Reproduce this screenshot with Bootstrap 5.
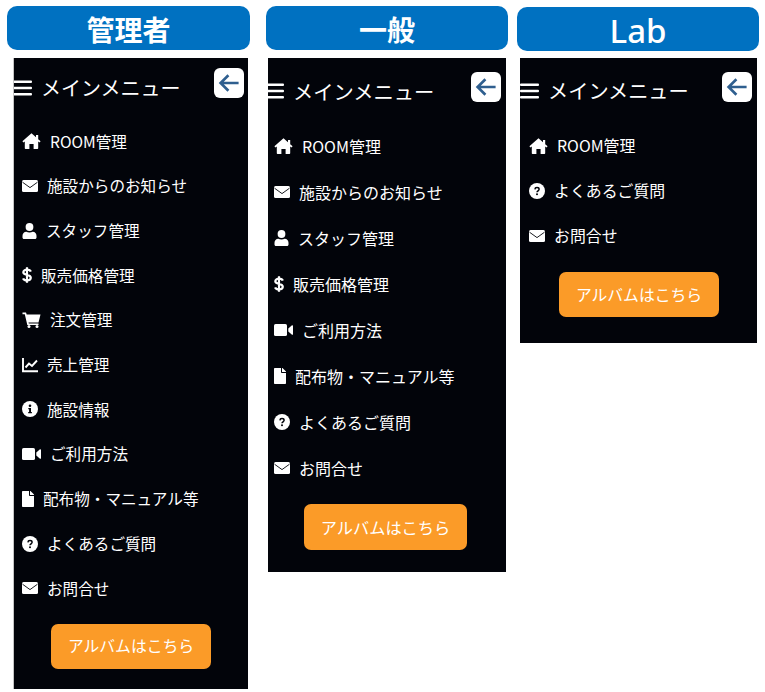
<!DOCTYPE html>
<html lang="ja">
<head>
  <meta charset="UTF-8" />
  <meta name="viewport" content="width=device-width, initial-scale=1" />
  <title>メインメニュー</title>
  <link href="https://cdn.jsdelivr.net/npm/bootstrap@5.3.0/dist/css/bootstrap.min.css" rel="stylesheet" />
  <style>
    body { background: #fff; font-family: "Noto Sans CJK JP", "Noto Sans", sans-serif; }
    .page-wrap { padding: 6px 0 0 7px; height: 692px; overflow: hidden; }
    .role-col { width: 243px; flex: none; }
    .role-col-b { width: 242px; margin-left: 16px; }
    .role-col-c { width: 242px; margin-left: 9px; }
    .role-head { height: 44px; padding-top: 2px; background: #0071c1; color: #fff; border-radius: 10px; font-size: 28px; font-weight: 700; line-height: 1; }
    .role-col-c .role-head { margin-top: 1px; font-family: "Noto Sans", sans-serif; font-size: 33px; font-weight: 500; }
    .side-panel { background: #02040a; color: #fff; overflow: hidden; margin-top: 8px; }
    .panel-a { margin-left: 6px; width: 235px; height: 631px; border-left: 1px solid #c4c4c4; }
    .panel-b { margin-left: 2px; width: 238px; height: 514px; }
    .panel-c { margin-left: 3px; width: 237px; height: 285px; margin-top: 7px; }
    .panel-top { height: 59px; margin-bottom: 2px; padding-right: 4px; }
    .panel-b .panel-top, .panel-c .panel-top { height: 56px; margin-top: 5px; margin-bottom: 4px; padding-right: 5px; }
    .menu-title { font-size: 20px; line-height: 1; margin-left: 9px; white-space: nowrap; }
    .panel-b .menu-title { font-size: 20.3px; margin-left: 9px; }
    .panel-c .menu-title { font-size: 20.2px; margin-left: 9px; }
    .bars-ico { width: 19px; height: 16px; fill: #fff; flex: none; margin-left: -1px; }
    .panel-b .bars-ico { margin-left: -3px; }
    .panel-c .bars-ico { margin-left: 0; }
    .back-box { width: 30px; height: 30px; background: #fff; border-radius: 6px; border: 0; margin-top: -9px; }
    .back-box svg { width: 24px; height: 24px; fill: none; stroke: #2f5f8f; stroke-width: 2.2; }
    .menu-list { list-style: none; margin: 0; padding: 0 0 0 8px; font-size: 15.6px; }
    .panel-b .menu-list { padding-left: 6px; font-size: 16px; }
    .panel-c .menu-list { padding-left: 9px; font-size: 15.9px; }
    .menu-list li { height: 44.7px; }
    .panel-b .menu-list li { height: 46px; }
    .panel-c .menu-list li { height: 45px; }
    .menu-ico { height: 16px; fill: #fff; margin-right: 9px; flex: none; }
    .album-btn { background: #fb9b28; border: 0; color: #fff; border-radius: 7px; width: 160px; height: 45px; font-size: 15.8px; }
    .album-btn:hover { background: #fb9b28; color: #fff; }
    .panel-b .album-btn { width: 163px; height: 46px; font-size: 16.2px; }
    .album-row-a { padding-left: 37px; margin-top: 13px; }
    .album-row-b { padding-left: 36px; margin-top: 13px; }
    .album-row-c { padding-left: 39px; margin-top: 14px; }
  </style>
</head>
<body>
  <svg width="0" height="0" class="position-absolute">
    <symbol id="i-bars" viewBox="0 0 19 16"><rect y="0.500" width="19" height="2.600" rx="1"/><rect y="6.700" width="19" height="2.600" rx="1"/><rect y="12.900" width="19" height="2.600" rx="1"/></symbol>
    <symbol id="i-home" viewBox="0 0 19 16"><path d="M9.500 .3L.4 8.300l1.100 1.300 1.300-1.100v6.700c0 .4.300.7.700.7h3.900v-5h4.200v5h3.900c.4 0 .7-.3.700-.7V8.500l1.300 1.100 1.100-1.300-2.400-2.100V2h-2.200v2.300z"/></symbol>
    <symbol id="i-mail" viewBox="0 0 16 16"><rect y="2" width="16" height="12" rx="1.500"/><path d="M.5 4.200L8 9.600l7.500-5.400" fill="none" stroke="#02040a" stroke-width=".9"/></symbol>
    <symbol id="i-user" viewBox="0 0 15 16"><circle cx="7.500" cy="4" r="3.900"/><path d="M4.300 8.800C5.200 9.200 6.300 9.500 7.500 9.500S9.800 9.200 10.700 8.800C13 8.800 14.500 10.500 14.500 12.800V14.500C14.500 15.300 13.900 16 13 16H2C1.100 16 .5 15.300 .5 14.500V12.800C.5 10.500 2 8.800 4.300 8.800z"/></symbol>
    <symbol id="i-dollar" viewBox="0 0 10 16"><path d="M8.800 4.600C8.300 3.200 6.800 2.600 5 2.600 3 2.600 1.300 3.600 1.300 5.200 1.300 8.700 8.800 7 8.800 10.800 8.800 12.400 7 13.400 5 13.400 3.100 13.400 1.600 12.700 1.100 11.300M5 .2V15.800" fill="none" stroke="#fff" stroke-width="2.200"/></symbol>
    <symbol id="i-cart" viewBox="0 0 19 16"><path d="M.5 .5H4L4.700 2.500H18.500L16.500 10.500H6.500L6.800 11.500H16.500V13H5.300L2.800 2.200H.5z"/><circle cx="7" cy="14.500" r="1.500"/><circle cx="15" cy="14.500" r="1.500"/></symbol>
    <symbol id="i-chart" viewBox="0 0 16 16"><path d="M1 1V14.300H16M3.500 10.500L7 6.500 10 9 15 3.500" fill="none" stroke="#fff" stroke-width="1.900"/></symbol>
    <symbol id="i-info" viewBox="0 0 16 16"><circle cx="8" cy="8" r="8"/><circle cx="8" cy="4.800" r="1.300" fill="#02040a"/><path d="M6.300 7H9V10.900H9.900V12.200H6.200V10.900H7.100V8.300H6.300z" fill="#02040a"/></symbol>
    <symbol id="i-video" viewBox="0 0 19 16"><rect y="2" width="13" height="12" rx="1.600"/><path d="M14.300 6.600L18 3.300C18.400 3 19 3.200 19 3.800V12.200C19 12.800 18.400 13 18 12.700L14.300 9.400z"/></symbol>
    <symbol id="i-file" viewBox="0 0 384 512"><path d="M224 136V0H24C10.700 0 0 10.700 0 24v464c0 13.300 10.700 24 24 24h336c13.300 0 24-10.700 24-24V160H248c-13.200 0-24-10.800-24-24zm160-14.100v6.100H256V0h6.100c6.400 0 12.500 2.500 17 7l97.900 98c4.500 4.500 7 10.600 7 16.900z"/></symbol>
    <symbol id="i-help" viewBox="0 0 16 16"><circle cx="8" cy="8" r="8"/><path d="M5.900 6.400C6 5.200 6.900 4.600 8 4.600 9.200 4.600 10.100 5.300 10.100 6.300 10.100 7.700 8 7.900 8 9.300" fill="none" stroke="#02040a" stroke-width="1.500"/><circle cx="8" cy="11.300" r="1" fill="#02040a"/></symbol>
    <symbol id="i-back" viewBox="0 0 20 20"><path d="M18 10H3M9.500 3.500L3 10l6.500 6.500"/></symbol>
  </svg>

  <div class="page-wrap d-flex align-items-start">
    <!-- 管理者 -->
    <div class="role-col">
      <div class="role-head d-flex align-items-center justify-content-center">管理者</div>
      <div class="side-panel panel-a">
        <div class="panel-top d-flex align-items-center justify-content-between">
          <div class="d-flex align-items-center">
            <svg class="bars-ico"><use href="#i-bars"/></svg>
            <span class="menu-title">メインメニュー</span>
          </div>
          <button class="back-box d-flex align-items-center justify-content-center p-0"><svg><use href="#i-back"/></svg></button>
        </div>
        <ul class="menu-list">
          <li class="d-flex align-items-center"><svg class="menu-ico" width="19"><use href="#i-home"/></svg>ROOM管理</li>
          <li class="d-flex align-items-center"><svg class="menu-ico" width="16"><use href="#i-mail"/></svg>施設からのお知らせ</li>
          <li class="d-flex align-items-center"><svg class="menu-ico" width="15"><use href="#i-user"/></svg>スタッフ管理</li>
          <li class="d-flex align-items-center"><svg class="menu-ico" width="10"><use href="#i-dollar"/></svg>販売価格管理</li>
          <li class="d-flex align-items-center"><svg class="menu-ico" width="19"><use href="#i-cart"/></svg>注文管理</li>
          <li class="d-flex align-items-center"><svg class="menu-ico" width="16"><use href="#i-chart"/></svg>売上管理</li>
          <li class="d-flex align-items-center"><svg class="menu-ico" width="16"><use href="#i-info"/></svg>施設情報</li>
          <li class="d-flex align-items-center"><svg class="menu-ico" width="19"><use href="#i-video"/></svg>ご利用方法</li>
          <li class="d-flex align-items-center"><svg class="menu-ico" width="12"><use href="#i-file"/></svg>配布物・マニュアル等</li>
          <li class="d-flex align-items-center"><svg class="menu-ico" width="16"><use href="#i-help"/></svg>よくあるご質問</li>
          <li class="d-flex align-items-center"><svg class="menu-ico" width="16"><use href="#i-mail"/></svg>お問合せ</li>
        </ul>
        <div class="album-row-a"><button class="btn album-btn p-0">アルバムはこちら</button></div>
      </div>
    </div>

    <!-- 一般 -->
    <div class="role-col role-col-b">
      <div class="role-head d-flex align-items-center justify-content-center">一般</div>
      <div class="side-panel panel-b">
        <div class="panel-top d-flex align-items-center justify-content-between">
          <div class="d-flex align-items-center">
            <svg class="bars-ico"><use href="#i-bars"/></svg>
            <span class="menu-title">メインメニュー</span>
          </div>
          <button class="back-box d-flex align-items-center justify-content-center p-0"><svg><use href="#i-back"/></svg></button>
        </div>
        <ul class="menu-list">
          <li class="d-flex align-items-center"><svg class="menu-ico" width="19"><use href="#i-home"/></svg>ROOM管理</li>
          <li class="d-flex align-items-center"><svg class="menu-ico" width="16"><use href="#i-mail"/></svg>施設からのお知らせ</li>
          <li class="d-flex align-items-center"><svg class="menu-ico" width="15"><use href="#i-user"/></svg>スタッフ管理</li>
          <li class="d-flex align-items-center"><svg class="menu-ico" width="10"><use href="#i-dollar"/></svg>販売価格管理</li>
          <li class="d-flex align-items-center"><svg class="menu-ico" width="19"><use href="#i-video"/></svg>ご利用方法</li>
          <li class="d-flex align-items-center"><svg class="menu-ico" width="12"><use href="#i-file"/></svg>配布物・マニュアル等</li>
          <li class="d-flex align-items-center"><svg class="menu-ico" width="16"><use href="#i-help"/></svg>よくあるご質問</li>
          <li class="d-flex align-items-center"><svg class="menu-ico" width="16"><use href="#i-mail"/></svg>お問合せ</li>
        </ul>
        <div class="album-row-b"><button class="btn album-btn p-0">アルバムはこちら</button></div>
      </div>
    </div>

    <!-- Lab -->
    <div class="role-col role-col-c">
      <div class="role-head d-flex align-items-center justify-content-center">Lab</div>
      <div class="side-panel panel-c">
        <div class="panel-top d-flex align-items-center justify-content-between">
          <div class="d-flex align-items-center">
            <svg class="bars-ico"><use href="#i-bars"/></svg>
            <span class="menu-title">メインメニュー</span>
          </div>
          <button class="back-box d-flex align-items-center justify-content-center p-0"><svg><use href="#i-back"/></svg></button>
        </div>
        <ul class="menu-list">
          <li class="d-flex align-items-center"><svg class="menu-ico" width="19"><use href="#i-home"/></svg>ROOM管理</li>
          <li class="d-flex align-items-center"><svg class="menu-ico" width="16"><use href="#i-help"/></svg>よくあるご質問</li>
          <li class="d-flex align-items-center"><svg class="menu-ico" width="16"><use href="#i-mail"/></svg>お問合せ</li>
        </ul>
        <div class="album-row-c"><button class="btn album-btn p-0">アルバムはこちら</button></div>
      </div>
    </div>
  </div>

  <script src="https://cdn.jsdelivr.net/npm/bootstrap@5.3.0/dist/js/bootstrap.bundle.min.js"></script>
</body>
</html>
